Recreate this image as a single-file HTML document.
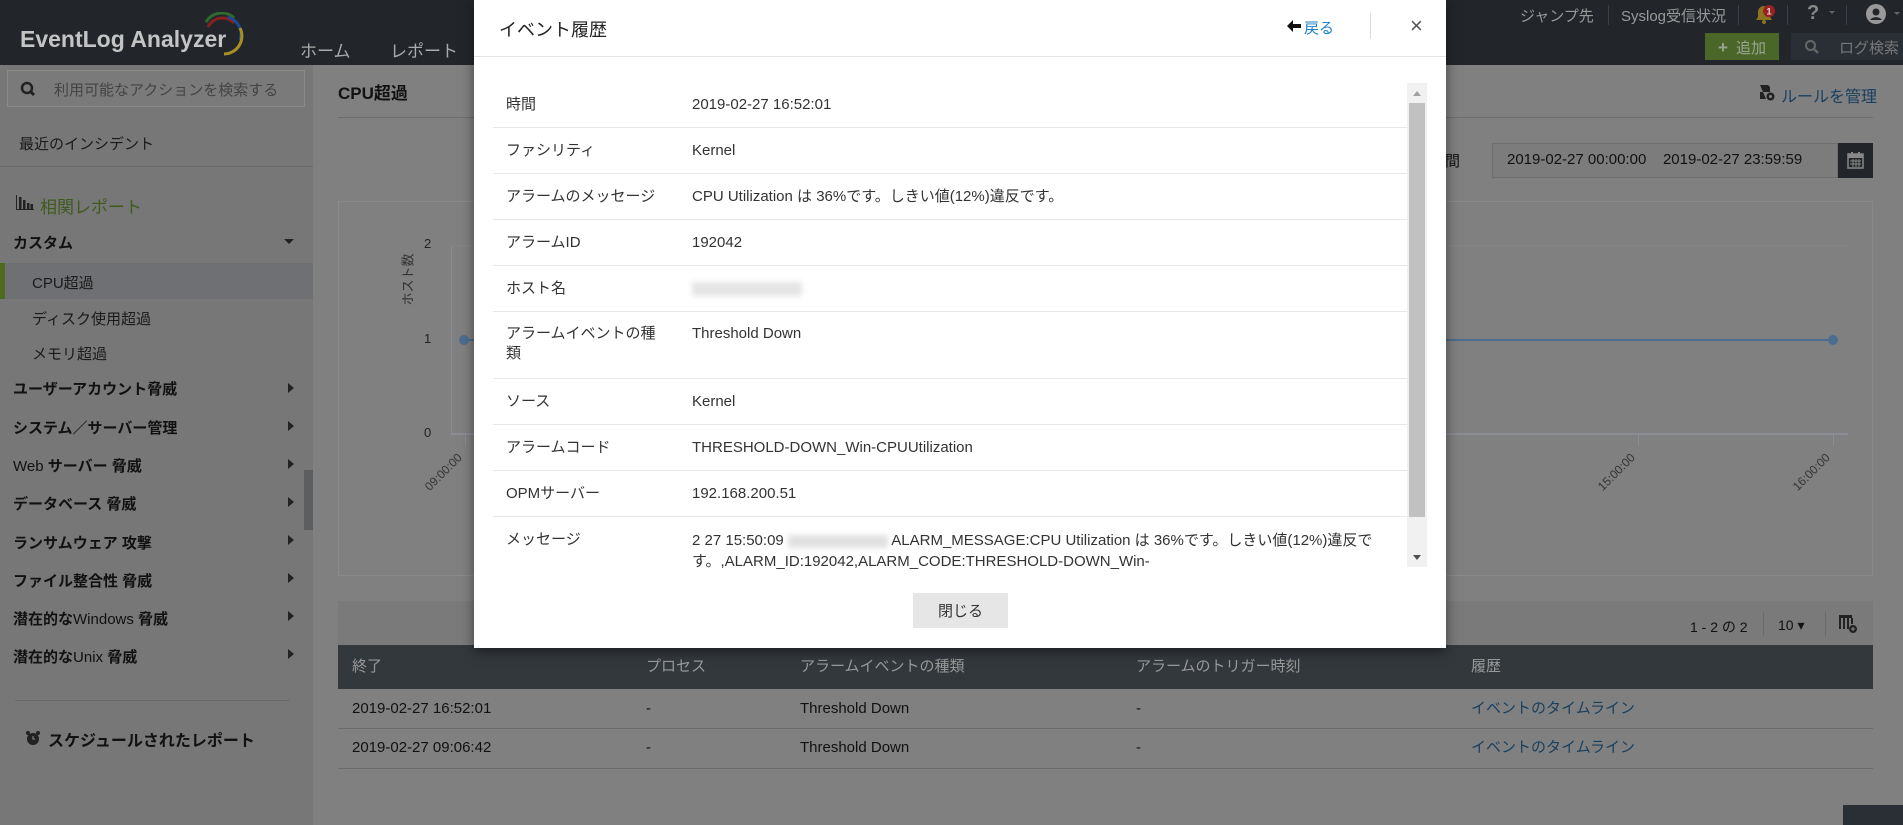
<!DOCTYPE html>
<html><head><meta charset="utf-8">
<style>
*{margin:0;padding:0;box-sizing:border-box}
body{width:1903px;height:825px;overflow:hidden;position:relative;background:#808080;font-family:"Liberation Sans","Noto Sans CJK JP",sans-serif;color:#1e1e1e}
.a{position:absolute;white-space:nowrap}
#hdr{position:absolute;left:0;top:0;width:1903px;height:65px;background:#22262b}
#side{position:absolute;left:0;top:65px;width:313px;height:760px;background:#777777}
.si{position:absolute;left:13px;font-size:15px;font-weight:bold;color:#111}
.sub{position:absolute;left:32px;font-size:15px;color:#1a1a1a}
.tri{position:absolute;left:288px;width:0;height:0;border-top:5px solid transparent;border-bottom:5px solid transparent;border-left:6px solid #222}
#modal{position:absolute;left:474px;top:0;width:972px;height:648px;background:#fff;box-shadow:0 3px 12px rgba(0,0,0,.5)}
.lbl{position:absolute;left:32px;font-size:15px;color:#333;line-height:20px}
.val{position:absolute;left:218px;font-size:15px;color:#333;line-height:20px}
.ln{position:absolute;left:19px;width:914px;height:1px;background:#e8e8e8}
.th{position:absolute;top:657px;font-size:15px;color:#999;line-height:20px}
.td{position:absolute;font-size:15px;color:#111;line-height:20px}
</style></head><body>
<div id="hdr">
 <div class="a" style="left:20px;top:26px;font-size:23px;font-weight:bold;color:#c4c4c4">EventLog Analyzer</div>
 <svg class="a" style="left:200px;top:12px" width="46" height="44" viewBox="0 0 46 44"><path d="M6 10 A18 18 0 0 1 34 6" stroke="#2e6a30" stroke-width="3" fill="none"/><path d="M8 15 A16 16 0 0 1 34 11" stroke="#8a2020" stroke-width="3" fill="none"/><path d="M28 5 A18 18 0 0 1 40 28" stroke="#1f4a8a" stroke-width="3" fill="none"/><path d="M40 16 A18 18 0 0 1 24 42" stroke="#a89022" stroke-width="3" fill="none"/></svg>
 <div class="a" style="left:300px;top:37px;font-size:17px;color:#aaa">ホーム</div>
 <div class="a" style="left:390px;top:37px;font-size:17px;color:#aaa">レポート</div>
 <div class="a" style="left:1520px;top:5px;font-size:15px;color:#999">ジャンプ先</div>
 <div class="a" style="left:1608px;top:5px;width:1px;height:20px;background:#3a3f45"></div>
 <div class="a" style="left:1621px;top:5px;font-size:15px;color:#999">Syslog受信状況</div>
 <div class="a" style="left:1738px;top:5px;width:1px;height:20px;background:#3a3f45"></div>
 <svg class="a" style="left:1752px;top:3px" width="24" height="22" viewBox="0 0 24 22"><path d="M4 17 L20 17 L18 14 L18 9 A6 6 0 0 0 6 9 L6 14 Z" fill="#8a7420"/><circle cx="12" cy="19" r="2" fill="#8a7420"/><circle cx="17" cy="8" r="6" fill="#9a1f1f"/><text x="17" y="11.5" font-size="9" fill="#ddd" text-anchor="middle" font-family="Liberation Sans" font-weight="bold">1</text></svg>
 <div class="a" style="left:1787px;top:5px;width:1px;height:20px;background:#3a3f45"></div>
 <div class="a" style="left:1807px;top:2px;font-size:20px;font-weight:bold;color:#888">?</div>
 <div class="a" style="left:1829px;top:11px;border-left:3px solid transparent;border-right:3px solid transparent;border-top:3px solid #666"></div>
 <div class="a" style="left:1846px;top:5px;width:1px;height:20px;background:#3a3f45"></div>
 <svg class="a" style="left:1866px;top:4px" width="20" height="20" viewBox="0 0 20 20"><circle cx="10" cy="10" r="10" fill="#999"/><circle cx="10" cy="8" r="3.5" fill="#22262b"/><path d="M4 16 A7 6 0 0 1 16 16 Z" fill="#22262b"/></svg>
 <div class="a" style="left:1894px;top:12px;border-left:3px solid transparent;border-right:3px solid transparent;border-top:3px solid #666"></div>
 <div class="a" style="left:1705px;top:33px;width:74px;height:27px;background:#4a6628;color:#9aa58f;font-size:15px;padding:4px 0 0 13px"><b style="font-size:17px;margin-right:8px">+</b>追加</div>
 <div class="a" style="left:1791px;top:33px;width:112px;height:27px;background:#2a2f35;color:#777;font-size:15px;padding:4px 0 0 48px">ログ検索</div>
 <svg class="a" style="left:1804px;top:39px" width="16" height="16" viewBox="0 0 16 16"><circle cx="6.5" cy="6.5" r="4.5" stroke="#666" stroke-width="2" fill="none"/><path d="M10 10 L14 14" stroke="#666" stroke-width="2.5"/></svg>
</div>

<div id="side">
 <div class="a" style="left:7px;top:5px;width:298px;height:37px;border:1px solid #8a8a8a;background:#7a7a7a"></div>
 <svg class="a" style="left:20px;top:16px" width="18" height="16" viewBox="0 0 18 16"><circle cx="7" cy="7" r="5" stroke="#222" stroke-width="2.5" fill="none"/><path d="M10.5 10.5 L14 14" stroke="#222" stroke-width="3"/></svg>
 <div class="a" style="left:54px;top:14px;font-size:15px;color:#444">利用可能なアクションを検索する</div>
 <div class="a" style="left:19px;top:68px;font-size:15px;color:#1a1a1a">最近のインシデント</div>
 <div class="a" style="left:0;top:101px;width:313px;height:1px;background:#6a6a6a"></div>
 <svg class="a" style="left:16px;top:130px" width="18" height="15" viewBox="0 0 18 15"><path d="M0 0V15H18" stroke="#222" stroke-width="2" fill="none"/><rect x="3" y="2" width="2.5" height="12" fill="#222"/><rect x="7" y="5" width="2.5" height="9" fill="#222"/><rect x="11" y="8" width="2.5" height="6" fill="#222"/><rect x="14.5" y="9" width="2.5" height="5" fill="#222"/></svg>
 <div class="a" style="left:40px;top:128px;font-size:17px;color:#3f5a1e">相関レポート</div>
 <div class="si" style="top:167px">カスタム</div>
 <div class="a" style="left:284px;top:174px;border-left:5px solid transparent;border-right:5px solid transparent;border-top:5px solid #222"></div>
 <div class="a" style="left:0;top:198px;width:313px;height:36px;background:#6f7073"></div>
 <div class="a" style="left:0;top:198px;width:5px;height:36px;background:#4b6b1e"></div>
 <div class="sub" style="top:207px">CPU超過</div>
 <div class="sub" style="top:243px">ディスク使用超過</div>
 <div class="sub" style="top:278px">メモリ超過</div>
 <div class="si" style="top:313px">ユーザーアカウント脅威</div><div class="tri" style="top:318px"></div>
 <div class="si" style="top:352px">システム／サーバー管理</div><div class="tri" style="top:356px"></div>
 <div class="si" style="top:390px"><span style="font-weight:normal">Web</span> サーバー 脅威</div><div class="tri" style="top:394px"></div>
 <div class="si" style="top:428px">データベース 脅威</div><div class="tri" style="top:432px"></div>
 <div class="si" style="top:467px">ランサムウェア 攻撃</div><div class="tri" style="top:470px"></div>
 <div class="si" style="top:505px">ファイル整合性 脅威</div><div class="tri" style="top:508px"></div>
 <div class="si" style="top:543px">潜在的な<span style="font-weight:normal">Windows</span> 脅威</div><div class="tri" style="top:546px"></div>
 <div class="si" style="top:581px">潜在的な<span style="font-weight:normal">Unix</span> 脅威</div><div class="tri" style="top:584px"></div>
 <div class="a" style="left:15px;top:635px;width:275px;height:1px;background:#6a6a6a"></div>
 <svg class="a" style="left:25px;top:665px" width="16" height="16" viewBox="0 0 16 16"><circle cx="8" cy="9" r="6" fill="#222"/><circle cx="3" cy="3" r="2" fill="#222"/><circle cx="13" cy="3" r="2" fill="#222"/><path d="M8 6V9H10" stroke="#777" stroke-width="1.3" fill="none"/></svg>
 <div class="a" style="left:48px;top:662px;font-size:16px;font-weight:bold;color:#111">スケジュールされたレポート</div>
 <div class="a" style="left:304px;top:405px;width:9px;height:60px;background:#5c5e60"></div>
</div>

<!-- content -->
<div class="a" style="left:338px;top:79px;font-size:17px;font-weight:bold;color:#111">CPU超過</div>
<div class="a" style="left:338px;top:117px;width:1535px;height:1px;background:#6e6e6e"></div>
<svg class="a" style="left:1758px;top:84px" width="18" height="18" viewBox="0 0 18 18"><path d="M2 1H10L12 3V8H2Z M2 1V15H8" fill="#222"/><circle cx="12.5" cy="12.5" r="4" fill="#222"/><circle cx="12.5" cy="12.5" r="1.5" fill="#808080"/></svg>
<div class="a" style="left:1781px;top:83px;font-size:16px;color:#173f5e">ルールを管理</div>
<div class="a" style="left:1430px;top:150px;font-size:15px;color:#111">期間</div>
<div class="a" style="left:1492px;top:143px;width:346px;height:35px;border:1px solid #6e6e6e;background:#7c7c7c;font-size:15px;color:#111;padding:7px 0 0 14px">2019-02-27 00:00:00&nbsp;&nbsp;&nbsp; 2019-02-27 23:59:59</div>
<div class="a" style="left:1838px;top:143px;width:35px;height:35px;background:#22262b"></div>
<svg class="a" style="left:1847px;top:151px" width="17" height="18" viewBox="0 0 17 18"><rect x="1" y="3" width="15" height="14" fill="none" stroke="#888" stroke-width="1.5"/><rect x="1" y="3" width="15" height="4" fill="#888"/><rect x="4" y="1" width="2" height="4" fill="#888"/><rect x="11" y="1" width="2" height="4" fill="#888"/><path d="M3 10H14M3 13H14M6 8V16M9 8V16M12 8V16" stroke="#888" stroke-width="1"/></svg>
<div class="a" style="left:338px;top:201px;width:1535px;height:375px;border:1px solid #8a8a8a"></div>
<div class="a" style="left:451px;top:245px;width:1px;height:189px;background:#8a8c96"></div>
<div class="a" style="left:451px;top:245px;width:1397px;height:1px;background:#858585"></div>
<div class="a" style="left:451px;top:433px;width:1397px;height:2px;background:#8a8c96"></div>
<div class="a" style="left:424px;top:236px;font-size:13px;color:#222">2</div>
<div class="a" style="left:424px;top:331px;font-size:13px;color:#222">1</div>
<div class="a" style="left:424px;top:425px;font-size:13px;color:#222">0</div>
<div class="a" style="left:380px;top:270px;width:54px;text-align:center;font-size:13px;color:#333;transform:rotate(-90deg);transform-origin:center">ホスト数</div>
<div class="a" style="left:464px;top:339px;width:1369px;height:2px;background:#4b6d90"></div>
<div class="a" style="left:459px;top:335px;width:10px;height:10px;border-radius:50%;background:#4b6d90"></div>
<div class="a" style="left:1828px;top:335px;width:10px;height:10px;border-radius:50%;background:#4b6d90"></div>
<div class="a" style="left:465px;top:435px;width:1px;height:10px;background:#8a8c96"></div>
<div class="a" style="left:1638px;top:435px;width:1px;height:10px;background:#8a8c96"></div>
<div class="a" style="left:1833px;top:435px;width:1px;height:10px;background:#8a8c96"></div>
<div class="a" style="left:420px;top:465px;font-size:12px;color:#333;transform:rotate(-45deg)">09:00:00</div>
<div class="a" style="left:1593px;top:465px;font-size:12px;color:#333;transform:rotate(-45deg)">15:00:00</div>
<div class="a" style="left:1788px;top:465px;font-size:12px;color:#333;transform:rotate(-45deg)">16:00:00</div>

<div class="a" style="left:338px;top:601px;width:1535px;height:45px;background:#7a7a7a"></div>
<div class="a" style="left:1690px;top:617px;font-size:14px;color:#111">1 - 2 の 2</div>
<div class="a" style="left:1763px;top:612px;width:1px;height:24px;background:#6a6a6a"></div>
<div class="a" style="left:1778px;top:617px;font-size:14px;color:#111">10 ▾</div>
<div class="a" style="left:1825px;top:612px;width:1px;height:24px;background:#6a6a6a"></div>
<svg class="a" style="left:1838px;top:614px" width="20" height="20" viewBox="0 0 20 20"><rect x="1" y="1" width="13" height="3" fill="#222"/><path d="M2 4V15M6 4V15M10 4V15M14 4V10" stroke="#222" stroke-width="2"/><circle cx="15" cy="15" r="4" fill="#222"/><path d="M13 15H17M15 13V17" stroke="#888" stroke-width="1"/></svg>
<div class="a" style="left:338px;top:645px;width:1535px;height:44px;background:#33383d"></div>
<div class="th" style="left:352px">終了</div>
<div class="th" style="left:646px">プロセス</div>
<div class="th" style="left:800px">アラームイベントの種類</div>
<div class="th" style="left:1136px">アラームのトリガー時刻</div>
<div class="th" style="left:1471px">履歴</div>
<div class="td" style="left:352px;top:699px">2019-02-27 16:52:01</div>
<div class="td" style="left:646px;top:699px">-</div>
<div class="td" style="left:800px;top:699px">Threshold Down</div>
<div class="td" style="left:1136px;top:699px">-</div>
<div class="td" style="left:1471px;top:699px;color:#173f5e">イベントのタイムライン</div>
<div class="a" style="left:338px;top:728px;width:1535px;height:1px;background:#6c6c6c"></div>
<div class="td" style="left:352px;top:738px">2019-02-27 09:06:42</div>
<div class="td" style="left:646px;top:738px">-</div>
<div class="td" style="left:800px;top:738px">Threshold Down</div>
<div class="td" style="left:1136px;top:738px">-</div>
<div class="td" style="left:1471px;top:738px;color:#173f5e">イベントのタイムライン</div>
<div class="a" style="left:338px;top:768px;width:1535px;height:1px;background:#6c6c6c"></div>
<div class="a" style="left:1843px;top:805px;width:60px;height:20px;background:#2a2f35"></div>

<div id="modal">
 <div class="a" style="left:25px;top:16px;font-size:18px;color:#222">イベント履歴</div>
 <svg class="a" style="left:813px;top:20px" width="14" height="12" viewBox="0 0 14 12"><path d="M0 6L6 0V4H14V8H6V12Z" fill="#111"/></svg>
 <div class="a" style="left:830px;top:17px;font-size:15px;color:#1a7fc7">戻る</div>
 <div class="a" style="left:896px;top:13px;width:1px;height:26px;background:#ddd"></div>
 <div class="a" style="left:936px;top:13px;font-size:22px;color:#555">×</div>
 <div class="a" style="left:0;top:56px;width:972px;height:1px;background:#e3e3e3"></div>
 <div class="a" style="left:933px;top:83px;width:20px;height:484px;background:#f1f1f1"></div>
 <div class="a" style="left:935px;top:103px;width:16px;height:414px;background:#c1c1c1"></div>
 <div class="a" style="left:939px;top:91px;border-left:4px solid transparent;border-right:4px solid transparent;border-bottom:5px solid #a0a0a0"></div>
 <div class="a" style="left:939px;top:555px;border-left:4px solid transparent;border-right:4px solid transparent;border-top:5px solid #505050"></div>
 <div class="lbl" style="top:95px">時間</div><div class="val" style="top:95px">2019-02-27 16:52:01</div>
 <div class="ln" style="top:127px"></div>
 <div class="lbl" style="top:141px">ファシリティ</div><div class="val" style="top:141px">Kernel</div>
 <div class="ln" style="top:173px"></div>
 <div class="lbl" style="top:187px">アラームのメッセージ</div><div class="val" style="top:187px">CPU Utilization は 36%です。しきい値(12%)違反です。</div>
 <div class="ln" style="top:219px"></div>
 <div class="lbl" style="top:233px">アラームID</div><div class="val" style="top:233px">192042</div>
 <div class="ln" style="top:265px"></div>
 <div class="lbl" style="top:279px">ホスト名</div><div class="val" style="top:282px;width:110px;height:14px;background:#e4e4e4;filter:blur(3px)"></div>
 <div class="ln" style="top:311px"></div>
 <div class="lbl" style="top:324px">アラームイベントの種<br>類</div><div class="val" style="top:324px">Threshold Down</div>
 <div class="ln" style="top:378px"></div>
 <div class="lbl" style="top:392px">ソース</div><div class="val" style="top:392px">Kernel</div>
 <div class="ln" style="top:424px"></div>
 <div class="lbl" style="top:438px">アラームコード</div><div class="val" style="top:438px">THRESHOLD-DOWN_Win-CPUUtilization</div>
 <div class="ln" style="top:470px"></div>
 <div class="lbl" style="top:484px">OPMサーバー</div><div class="val" style="top:484px">192.168.200.51</div>
 <div class="ln" style="top:516px"></div>
 <div class="lbl" style="top:530px">メッセージ</div>
 <div class="val" style="top:530px;line-height:21px">2 27 15:50:09 <span style="display:inline-block;width:100px;height:13px;background:#e0e0e0;filter:blur(3px);vertical-align:middle"></span> ALARM_MESSAGE:CPU Utilization は 36%です。しきい値(12%)違反で<br>す。,ALARM_ID:192042,ALARM_CODE:THRESHOLD-DOWN_Win-</div>
 <div class="a" style="left:439px;top:593px;width:95px;height:35px;background:#e6e6e6;font-size:15px;color:#333;text-align:center;padding-top:7px">閉じる</div>
</div>
</body></html>
